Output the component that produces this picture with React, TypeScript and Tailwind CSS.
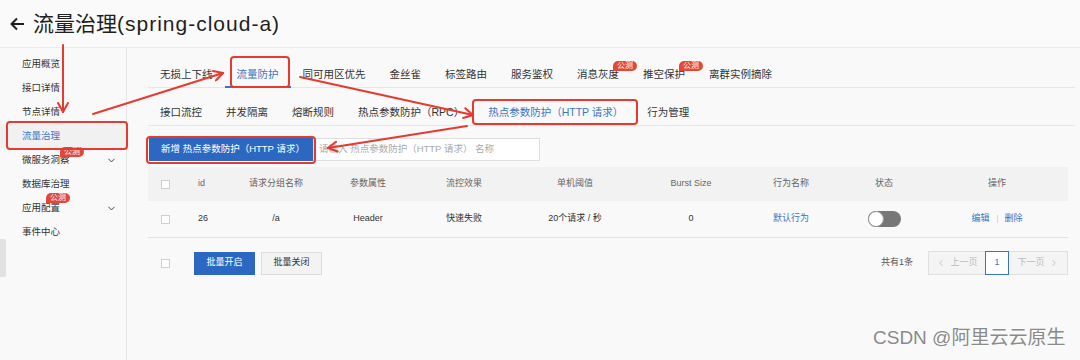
import { ChevronDown, ChevronLeft, ChevronRight } from "lucide-react";

const mainTabs = [
  { label: "无损上下线" },
  { label: "流量防护", active: true },
  { label: "同可用区优先" },
  { label: "金丝雀" },
  { label: "标签路由" },
  { label: "服务鉴权" },
  { label: "消息灰度", beta: true },
  { label: "推空保护", beta: true },
  { label: "离群实例摘除" },
];

const subTabs = [
  { label: "接口流控" },
  { label: "并发隔离" },
  { label: "熔断规则" },
  { label: "热点参数防护（RPC）" },
  { label: "热点参数防护（HTTP 请求）", active: true },
  { label: "行为管理" },
];

const menu = [
  { label: "应用概览" },
  { label: "接口详情" },
  { label: "节点详情" },
  { label: "流量治理", active: true },
  { label: "微服务洞察", beta: "left-[38px] -top-[6px]", arrow: true },
  { label: "数据库治理" },
  { label: "应用配置", beta: "left-[24px] -top-[8px]", arrow: true },
  { label: "事件中心" },
];

const cols = "grid grid-cols-[34px_54px_80px_104px_88px_134px_98px_102px_84px_142px] items-center";

const Beta = ({ className }: { className: string }) => (
  <span
    className={`absolute ${className} h-[10px] px-[4px] whitespace-nowrap rounded-[6px] rounded-bl-none bg-[#e0483a] text-white text-[8px] leading-[10px]`}
  >
    公测
  </span>
);

const Checkbox = () => (
  <span className="block w-[9px] h-[9px] border border-[#cfcfcf] bg-white" />
);

const Annotations = () => (
  <svg
    className="absolute inset-0 pointer-events-none"
    width="1080"
    height="360"
    viewBox="0 0 1080 360"
  >
    <defs>
      <marker
        id="head"
        markerUnits="userSpaceOnUse"
        markerWidth="12"
        markerHeight="12"
        refX="10"
        refY="6"
        orient="auto"
      >
        <path d="M1,1 L10,6 L1,11" fill="none" stroke="#e53a2f" strokeWidth="2" strokeLinecap="round" strokeLinejoin="round" />
      </marker>
    </defs>
    <g fill="none" stroke="#e53a2f" strokeWidth="2" strokeLinecap="round">
      <rect x="7" y="122" width="120" height="27" rx="3" />
      <rect x="231" y="57" width="58" height="30" rx="3" />
      <rect x="473" y="100" width="164" height="24" rx="3" />
      <rect x="147" y="137" width="168" height="26" rx="3" />
      <line x1="63" y1="45" x2="63" y2="112" markerEnd="url(#head)" />
      <line x1="93" y1="114" x2="223" y2="73" markerEnd="url(#head)" />
      <line x1="300" y1="77" x2="473" y2="115" markerEnd="url(#head)" />
      <line x1="467" y1="126" x2="328" y2="148" markerEnd="url(#head)" />
    </g>
  </svg>
);

export default function App() {
  return (
    <div className="relative w-[1080px] h-[360px] overflow-hidden bg-[#f9f9f9] text-[#333] font-['Liberation_Sans','Noto_Sans_CJK_SC',sans-serif]">
      <header className="h-[48px] flex items-center pl-[10px] border-b border-[#ececec] bg-[#fafafa]">
        <svg width="15" height="14" viewBox="0 0 15 14" className="mr-[8px]">
          <path d="M14 7H2M7 1.5L1.5 7L7 12.5" fill="none" stroke="#1f1f1f" strokeWidth="2" />
        </svg>
        <h1 className="text-[21px] leading-none text-[#1f1f1f]">
          流量治理<span className="tracking-[1px]">(spring-cloud-a)</span>
        </h1>
      </header>

      <div className="flex h-[312px]">
        <aside className="w-[127px] shrink-0 border-r border-[#e6e6e6] pt-[4px]">
          {menu.map((m) => (
            <div
              key={m.label}
              className={`relative flex items-center h-[24px] pl-[22px] pr-[9px] text-[9.5px] ${
                m.active ? "bg-[#f1f1f1] text-[#3a74c6]" : "text-[#333]"
              }`}
            >
              <span className="relative whitespace-nowrap">
                {m.label}
                {m.beta && <Beta className={m.beta} />}
              </span>
              {m.arrow && <ChevronDown size={11} strokeWidth={2} className="ml-auto text-[#333]" />}
            </div>
          ))}
        </aside>

        <main className="flex-1 pl-[21px] pr-[5px]">
          <nav className="flex h-[40px] border-b border-[#e6e6e6]">
            {mainTabs.map((t) => (
              <div
                key={t.label}
                className={`relative px-[12px] pt-[18px] text-[10.5px] leading-[16px] ${
                  t.active ? "text-[#3a74c6] border-b-2 border-[#3a74c6] -mb-px" : "text-[#333]"
                }`}
              >
                <span className="relative">
                  {t.label}
                  {t.beta && <Beta className="-right-[18px] -top-[7px]" />}
                </span>
              </div>
            ))}
          </nav>

          <nav className="flex h-[38px] border-b border-[#e6e6e6]">
            {subTabs.map((t) => (
              <div
                key={t.label}
                className={`px-[12px] pt-[16px] text-[10.5px] leading-[16px] ${
                  t.active ? "text-[#3a74c6]" : "text-[#333]"
                }`}
              >
                {t.label}
              </div>
            ))}
          </nav>

          <div className="flex mt-[12px] h-[23px]">
            <button className="w-[164px] ml-px bg-[#2c68c2] text-white text-[9.5px] text-left pl-[12px]">
              新增 热点参数防护（HTTP 请求）
            </button>
            <div className="w-[227px] border border-[#dedede] bg-white flex items-center pl-[5px] text-[9.5px] text-[#aaa]">
              请输入 热点参数防护（HTTP 请求） 名称
            </div>
          </div>

          <div className="mt-[6px] w-[920px] text-[9px]">
            <div className={`${cols} h-[34px] bg-[#f2f2f2] text-[#666]`}>
              <div className="flex justify-center"><Checkbox /></div>
              <div className="pl-[16px]">id</div>
              <div className="text-center">请求分组名称</div>
              <div className="text-center">参数属性</div>
              <div className="text-center">流控效果</div>
              <div className="text-center">单机阈值</div>
              <div className="text-center">Burst Size</div>
              <div className="text-center">行为名称</div>
              <div className="text-center">状态</div>
              <div className="text-center">操作</div>
            </div>
            <div className={`${cols} h-[37px] border-b border-[#e3e3e3] text-[#333]`}>
              <div className="flex justify-center"><Checkbox /></div>
              <div className="pl-[16px]">26</div>
              <div className="text-center">/a</div>
              <div className="text-center">Header</div>
              <div className="text-center">快速失败</div>
              <div className="text-center">20个请求 / 秒</div>
              <div className="text-center">0</div>
              <div className="text-center text-[#3a74c6]">默认行为</div>
              <div className="flex justify-center">
                <span className="relative w-[33px] h-[16px] rounded-full bg-[#777]">
                  <span className="absolute left-0 top-0 w-[16px] h-[16px] rounded-full bg-white border border-[#999]" />
                </span>
              </div>
              <div className="flex justify-center items-center gap-[7px] text-[#3a74c6]">
                <span>编辑</span>
                <span className="w-px h-[8px] bg-[#d8d8d8]" />
                <span>删除</span>
              </div>
            </div>

            <div className="flex items-center h-[50px]">
              <div className="w-[34px] flex justify-center"><Checkbox /></div>
              <button className="ml-[12px] w-[61px] h-[23px] bg-[#2c68c2] text-white text-[9px]">批量开启</button>
              <button className="ml-[6px] w-[61px] h-[23px] bg-[#f3f3f3] border border-[#dcdcdc] text-[#333] text-[9px]">批量关闭</button>
              <span className="ml-auto mr-[15px] text-[9px] text-[#555]">共有1条</span>
              <div className="flex h-[24px] border border-[#e0e0e0] bg-[#f4f4f4] text-[9px] text-[#bbb]">
                <span className="w-[56px] flex items-center justify-center gap-[4px]">
                  <ChevronLeft size={10} />上一页
                </span>
                <span className="w-[24px] flex items-center justify-center border border-[#3a74c6] bg-white text-[#3a74c6] -my-px">1</span>
                <span className="w-[58px] flex items-center justify-center gap-[4px]">
                  下一页<ChevronRight size={10} />
                </span>
              </div>
            </div>
          </div>
        </main>
      </div>

      <div className="absolute left-0 top-[239px] w-[6px] h-[38px] bg-[#e2e2e2] rounded-r-[2px]" />
      <Annotations />
      <div className="absolute left-[873px] top-[326px] text-[19px] leading-[24px] text-[#8a8a8a] [text-shadow:0_0_2px_#fff]">
        CSDN @阿里云云原生
      </div>
    </div>
  );
}
